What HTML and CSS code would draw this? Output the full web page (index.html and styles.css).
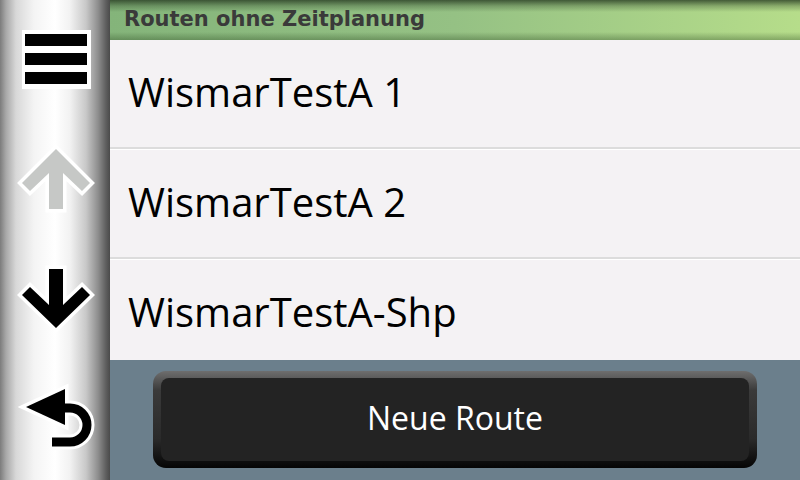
FILE: index.html
```html
<!DOCTYPE html>
<html>
<head>
<meta charset="utf-8">
<link rel="stylesheet" href="styles.css">
</head>
<body>
<div class="app">
  <nav class="sidebar">
    <div class="cell">
      <svg width="110" height="120" viewBox="0 0 110 120">
        <rect x="22" y="30" width="69" height="59" fill="#fff"/>
        <rect x="25" y="34" width="62" height="12" fill="#000"/>
        <rect x="25" y="53" width="62" height="12" fill="#000"/>
        <rect x="25" y="72" width="62" height="12" fill="#000"/>
      </svg>
    </div>
    <div class="cell">
      <svg width="110" height="120" viewBox="0 0 110 120">
        <polygon class="outl" points="56,29 90,63 82,71 63,53 63,89 49,89 49,53 30,71 22,63" fill="#c6c8c6"/>
      </svg>
    </div>
    <div class="cell">
      <svg width="110" height="120" viewBox="0 0 110 120">
        <polygon class="outl" points="49,29 63,29 63,65 82,47 90,55 56,88 22,55 30,47 49,65" fill="#000"/>
      </svg>
    </div>
    <div class="cell">
      <svg width="110" height="120" viewBox="0 0 110 120">
        <path d="M58 48 H70 A17 17 0 0 1 70 82 H52" fill="none" stroke="#fff" stroke-width="15"/>
        <polygon class="outl" points="26,47 65,29 65,65" fill="#000"/>
        <path d="M58 48 H70 A17 17 0 0 1 70 82 H52" fill="none" stroke="#000" stroke-width="9"/>
      </svg>
    </div>
  </nav>
  <main class="main">
    <header class="header">Routen ohne Zeitplanung</header>
    <ul class="list">
      <li class="row">WismarTestA 1</li>
      <li class="row">WismarTestA 2</li>
      <li class="row">WismarTestA-Shp</li>
    </ul>
    <div class="footer">
      <button class="btn"><span class="btn-inner">Neue Route</span></button>
    </div>
  </main>
</div>
</body>
</html>
```
FILE: styles.css
```css
html, body {
  margin: 0;
  padding: 0;
  width: 800px;
  height: 480px;
  overflow: hidden;
}
.app {
  display: flex;
  width: 800px;
  height: 480px;
}
.sidebar {
  width: 110px;
  flex: 0 0 110px;
  display: grid;
  grid-template-rows: repeat(4, 120px);
  background: linear-gradient(to right, #7c7c7c 0px, #a8a8a8 6px, #d8d8d8 16px, #f4f4f4 34px, #ffffff 55px, #f2f2f2 70px, #c8c8c8 86px, #8e8e8e 98px, #5e5e5e 106px, #4a4a4a 110px);
}
.cell svg {
  display: block;
}
.outl {
  stroke: #fff;
  stroke-width: 7;
  stroke-linejoin: miter;
  paint-order: stroke;
}
.main {
  flex: 1;
  display: flex;
  flex-direction: column;
  min-width: 0;
}
.header {
  height: 40px;
  box-sizing: border-box;
  padding-left: 14px;
  padding-bottom: 3px;
  display: flex;
  align-items: center;
  font-family: "DejaVu Sans", sans-serif;
  font-weight: bold;
  font-size: 21px;
  color: #3a3a3a;
  background:
    linear-gradient(to bottom, rgba(40,60,35,0.8) 0px, rgba(40,60,35,0.3) 6px, rgba(0,0,0,0) 12px, rgba(0,0,0,0) 32px, rgba(40,70,30,0.35) 40px),
    linear-gradient(to right, #84b47a 0%, #95c184 50%, #b6dd8a 100%);
}
.list {
  list-style: none;
  margin: 0;
  padding: 0;
  height: 320px;
  overflow: hidden;
  background: #f4f2f4;
}
.row {
  height: 107px;
  display: flex;
  align-items: center;
  padding-left: 18px;
  padding-bottom: 4px;
  box-sizing: border-box;
  font-family: "Open Sans", sans-serif;
  font-size: 40px;
  color: #000;
  border-bottom: 2px solid #dcdcdc;
  box-shadow: 0 1px 0 #ffffff;
  margin-bottom: 1px;
}
.row {
  height: 109px;
}
.footer {
  flex: 1;
  background: #6b7f8c;
  padding: 11px 43px 12px 43px;
  display: flex;
}
.btn {
  flex: 1;
  margin: 0;
  padding: 7px 8px 7px 8px;
  border: 0;
  border-radius: 13px;
  background: linear-gradient(to bottom, #6e6e6e 0%, #3a3a3a 20%, #2a2a2a 70%, #050505 100%);
  display: flex;
}
.btn-inner {
  flex: 1;
  border-radius: 8px;
  background: #232323;
  display: flex;
  align-items: center;
  justify-content: center;
  padding-bottom: 4px;
  font-family: "Open Sans", sans-serif;
  font-size: 32px;
  color: #fff;
}
```
